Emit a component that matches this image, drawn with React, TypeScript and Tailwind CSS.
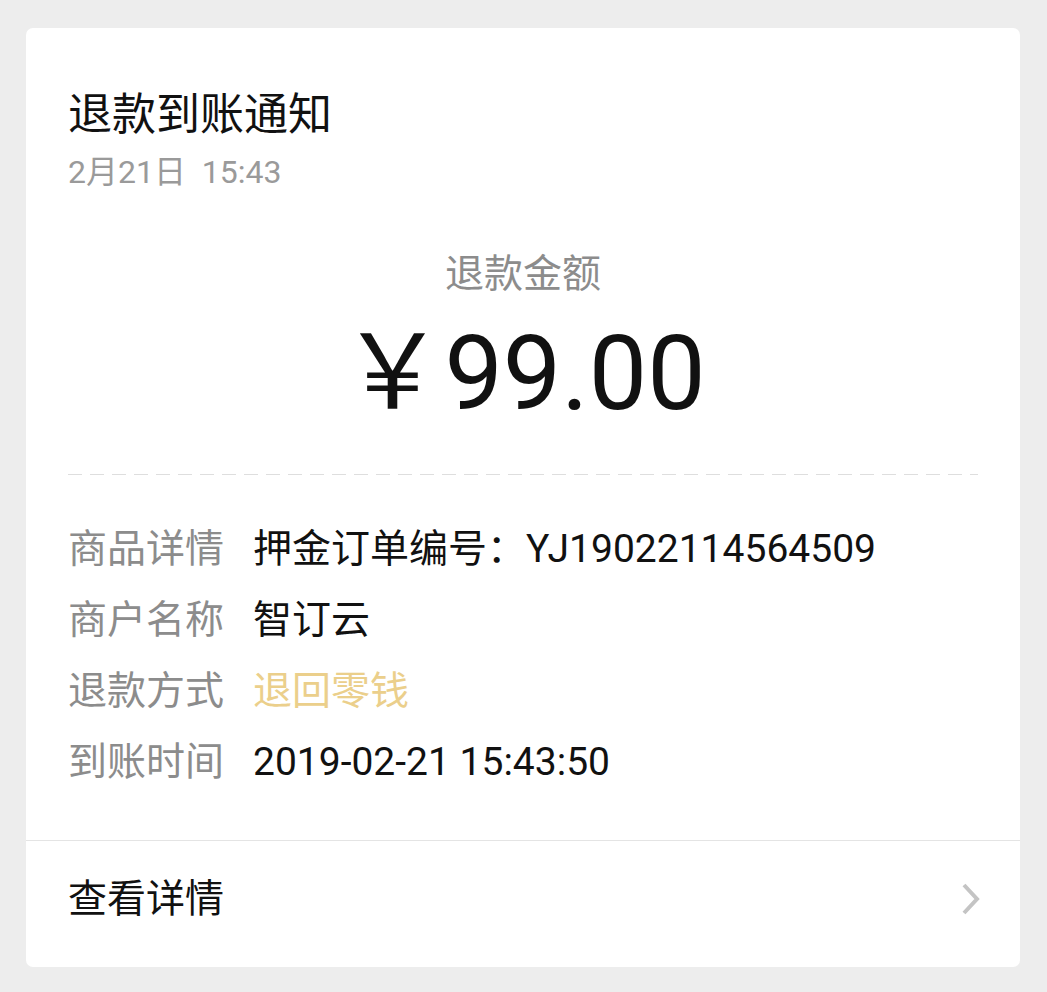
const rows = [
  { label: "商品详情", value: "押金订单编号：YJ19022114564509", tone: "text-[#111]" },
  { label: "商户名称", value: "智订云", tone: "text-[#111]" },
  { label: "退款方式", value: "退回零钱", tone: "text-[#ebcf8b]" },
  { label: "到账时间", value: "2019-02-21 15:43:50", tone: "text-[#111]" },
];

function Chevron() {
  return (
    <svg width="22" height="34" viewBox="0 0 22 34" fill="none">
      <path d="M4 3l13 14L4 31" stroke="#c4c4c4" strokeWidth="4" strokeLinejoin="miter" />
    </svg>
  );
}

export default function App() {
  return (
    <main className="min-h-[992px] w-[1047px] bg-[#ededed] pl-[26px] pr-[27px] pt-[28px] font-['Roboto','Noto_Sans_CJK_SC',sans-serif]">
      <div className="w-[994px] overflow-hidden rounded-[7px] bg-white">
        <div className="px-[42px] pt-[61px]">
          <h1 className="text-[44px] leading-[52px] text-[#111]">退款到账通知</h1>
          <p className="mt-[11px] text-[32px] leading-[40px] text-[#9a9a9a]">
            2月21日&nbsp;&nbsp;15:43
          </p>

          <div className="mt-[58px] flex flex-col items-center">
            <p className="text-[39px] leading-[48px] text-[#8c8c8c]">退款金额</p>
            <p className="mt-[24px] text-[104px] leading-[104px] text-[#111]">￥99.00</p>
          </div>

          <div className="mt-[48px] h-px bg-[repeating-linear-gradient(to_right,#dedede_0_14px,transparent_14px_22px)]" />

          <div className="mt-[39px] flex flex-col pb-[42px]">
            {rows.map((r) => (
              <div key={r.label} className="flex h-[71px] items-center text-[39px]">
                <span className="w-[185px] shrink-0 text-[#8c8c8c]">{r.label}</span>
                <span className={r.tone}>{r.value}</span>
              </div>
            ))}
          </div>
        </div>

        <div className="flex h-[127px] items-center justify-between border-t border-[#e4e4e4] pb-[10px] pl-[42px] pr-[38px]">
          <span className="text-[39px] text-[#111]">查看详情</span>
          <Chevron />
        </div>
      </div>
    </main>
  );
}
